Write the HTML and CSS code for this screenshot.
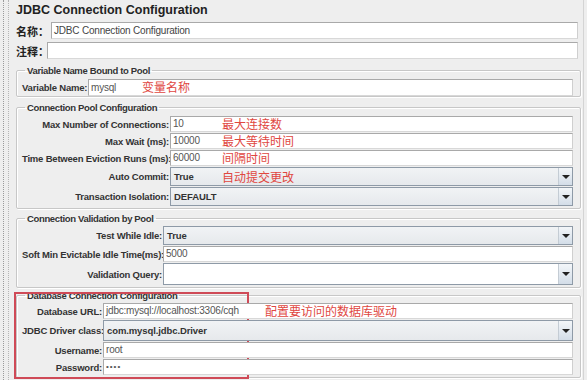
FILE: index.html
```html
<!DOCTYPE html>
<html lang="zh-CN">
<head>
    <meta charset="UTF-8">
    <title>JDBC Connection Configuration</title>
    <link rel="stylesheet" href="styles.css">
</head>
<body>
    <div class="splitter"></div>
    <main class="editor">
        <h1 class="editor-title">JDBC Connection Configuration</h1>

        <div class="name-row">
            <label class="cn-label">名称：</label>
            <div class="field">JDBC Connection Configuration</div>
        </div>
        <div class="name-row comment-row">
            <label class="cn-label">注释：</label>
            <div class="field"></div>
        </div>

        <fieldset class="panel pool-name">
            <legend>Variable Name Bound to Pool</legend>
            <div class="row">
                <label class="lbl">Variable Name:</label>
                <div class="field">mysql<span class="note note-var">变量名称</span></div>
            </div>
        </fieldset>

        <fieldset class="panel pool">
            <legend>Connection Pool Configuration</legend>
            <div class="row">
                <label class="lbl">Max Number of Connections:</label>
                <div class="field">10<span class="note note-pool">最大连接数</span></div>
            </div>
            <div class="row">
                <label class="lbl">Max Wait (ms):</label>
                <div class="field">10000<span class="note note-pool">最大等待时间</span></div>
            </div>
            <div class="row">
                <label class="lbl">Time Between Eviction Runs (ms):</label>
                <div class="field">60000<span class="note note-pool">间隔时间</span></div>
            </div>
            <div class="row row-combo">
                <label class="lbl">Auto Commit:</label>
                <div class="combo">True<span class="note note-pool">自动提交更改</span><span class="arrow"></span></div>
            </div>
            <div class="row row-combo">
                <label class="lbl">Transaction Isolation:</label>
                <div class="combo">DEFAULT<span class="arrow"></span></div>
            </div>
        </fieldset>

        <fieldset class="panel validation">
            <legend>Connection Validation by Pool</legend>
            <div class="row row-combo">
                <label class="lbl">Test While Idle:</label>
                <div class="combo">True<span class="arrow"></span></div>
            </div>
            <div class="row">
                <label class="lbl">Soft Min Evictable Idle Time(ms):</label>
                <div class="field">5000</div>
            </div>
            <div class="row row-combo row-query">
                <label class="lbl">Validation Query:</label>
                <div class="combo combo-edit"><span class="arrow"></span></div>
            </div>
        </fieldset>

        <fieldset class="panel database">
            <legend>Database Connection Configuration</legend>
            <div class="highlight"></div>
            <div class="row">
                <label class="lbl">Database URL:</label>
                <div class="field">jdbc:mysql://localhost:3306/cqh<span class="note note-db">配置要访问的数据库驱动</span></div>
            </div>
            <div class="row row-combo row-driver">
                <label class="lbl">JDBC Driver class:</label>
                <div class="combo">com.mysql.jdbc.Driver<span class="arrow"></span></div>
            </div>
            <div class="row">
                <label class="lbl">Username:</label>
                <div class="field">root</div>
            </div>
            <div class="row">
                <label class="lbl">Password:</label>
                <div class="field pw">••••</div>
            </div>
        </fieldset>
    </main>
</body>
</html>
```

FILE: styles.css
```css
* { margin: 0; padding: 0; box-sizing: border-box; }
body { display: flex; width: 587px; height: 380px; overflow: hidden; background-color: #eeeeee; color: #333333; font-family: "Liberation Sans", "Noto Sans CJK SC", sans-serif; font-size: 10px; }
.splitter { width: 6px; margin-left: 3px; border-left: 1px dotted #9a9a9a; border-right: 1px dotted #b5b5b5; }
.editor { width: 575px; padding: 0 4px 0 7px; border-right: 1px solid #d4d4d4; }
.editor-title { font-size: 12.5px; font-weight: bold; line-height: 17px; margin: 2px 0 3px; color: #222222; }

.name-row { display: flex; align-items: center; height: 17px; margin-bottom: 3px; }
.cn-label { font-family: "Noto Sans CJK SC", sans-serif; font-weight: bold; font-size: 11px; color: #222222; width: 35px; white-space: nowrap; }
.comment-row .cn-label { width: 31px; }
.name-row .field { height: 17px; line-height: 15px; color: #444444; margin-right: 1px; }

.field { position: relative; flex: 1; height: 16px; line-height: 14px; padding-left: 2px; background-color: #ffffff; border: 1px solid #a9a9a9; border-right-color: #cfcfcf; border-bottom-color: #d8d8d8; color: #555555; letter-spacing: -0.2px; white-space: nowrap; }

.panel { position: relative; width: 565px; border: 1px solid #c7c7c7; border-radius: 2px; box-shadow: inset 1px 1px 0 #ffffff, 1px 1px 0 #ffffff; padding: 2px 7px 2px 5px; }
.panel legend { font-size: 9.5px; font-weight: bold; letter-spacing: -0.35px; color: #333333; padding: 0 2px; margin-left: 3px; line-height: 11px; }
.pool-name { margin-top: 6px; padding-top: 3px; padding-bottom: 1px; }
.pool-name .field { height: 17px; line-height: 15px; }
.pool { margin-top: 5px; padding-top: 3px; }
.validation { margin-top: 4px; }
.database { margin-top: 2px; }

.row { display: flex; align-items: center; height: 16px; }
.row + .row { margin-top: 1px; }
.row-combo { height: 19px; }
.row-query { height: 22px; }
.row-driver { height: 21px; }
.validation .row-combo:first-child { height: 20px; }
.lbl { font-size: 9.5px; font-weight: bold; letter-spacing: -0.2px; color: #333333; text-align: right; padding-right: 1px; white-space: nowrap; }
.pool-name .lbl { width: 66px; }
.pool .lbl { width: 148px; }
.validation .lbl { width: 141px; }
.database .lbl { width: 81px; }

.combo { position: relative; flex: 1; height: 100%; line-height: 17px; padding-left: 3px; background: linear-gradient(#f1f3f5, #e6e9ec); border: 1px solid #8e9aa7; font-size: 9.5px; font-weight: bold; letter-spacing: -0.1px; color: #333333; white-space: nowrap; }
.row-query .combo, .row-driver .combo { line-height: 19px; }
.combo-edit { background: #ffffff; }
.arrow { position: absolute; top: 0; right: 0; bottom: 0; width: 14px; background: linear-gradient(#f3f6f9, #d3dde8); border-left: 1px solid #c4ccd4; }
.arrow::after { content: ""; position: absolute; left: 3px; top: 50%; margin-top: -2px; border-left: 4px solid transparent; border-right: 4px solid transparent; border-top: 4px solid #222222; }

.note { position: absolute; top: -1px; font-family: "Noto Sans CJK SC", sans-serif; font-weight: normal; font-size: 12px; letter-spacing: 0; line-height: 15px; color: #e0473f; }
.row-combo .note { top: 1px; }
.note-var { left: 53px; }
.note-pool { left: 51px; }
.note-db { left: 161px; }
.pw { letter-spacing: 1px; font-size: 8px; }
.highlight { position: absolute; left: -3px; top: -9px; width: 235px; height: 87px; border: 2px solid #cf4a57; pointer-events: none; }
```
